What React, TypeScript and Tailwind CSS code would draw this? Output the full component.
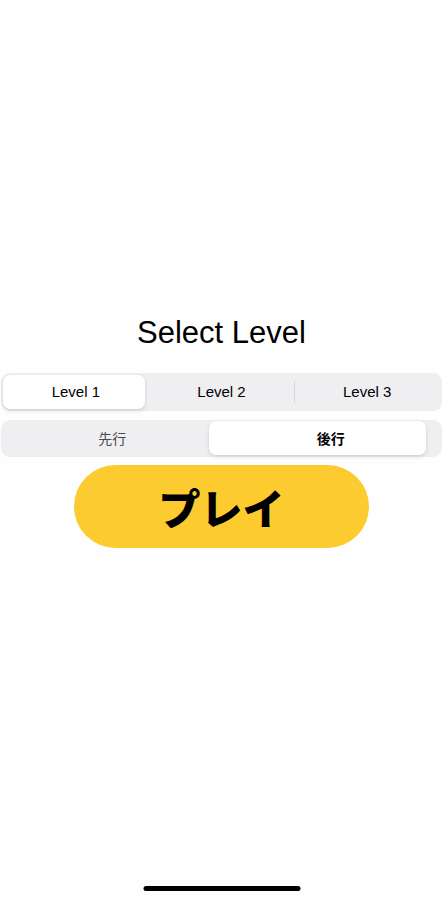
const levels = ["Level 1", "Level 2", "Level 3"];

const App = () => {
  const selectedLevel = 0;

  return (
    <div
      className="relative h-[901px] w-full bg-[#fefefe] flex flex-col items-center pt-[314px]"
      style={{ fontFamily: '"Liberation Sans", "Noto Sans CJK JP", sans-serif' }}
    >
      <h1 className="text-[31px] leading-[38px] text-black">Select Level</h1>

      {/* Level picker */}
      <div className="mt-[21px] w-full px-px">
        <div className="relative flex h-[38px] rounded-[9px] bg-[#efeef1] p-[2px]">
          {levels.map((label, i) => (
            <div key={label} className="relative flex flex-1 items-center justify-center">
              {i === selectedLevel && (
                <div className="absolute inset-y-0 left-0 right-[4px] rounded-[7px] bg-white shadow-[0_2px_4px_rgba(0,0,0,0.12),0_0_1px_rgba(0,0,0,0.08)]" />
              )}
              {i === 2 && (
                <div className="absolute left-0 top-[6px] bottom-[6px] w-px bg-[#d6d6da]" />
              )}
              <span className="relative text-[15px] text-black">{label}</span>
            </div>
          ))}
        </div>
      </div>

      {/* Turn picker */}
      <div className="mt-[9px] w-full px-px">
        <div className="relative flex h-[37px] rounded-[9px] bg-[#efeef1] p-[2px]">
          <div className="absolute top-[1px] bottom-[2px] left-[208px] w-[217px] rounded-[7px] bg-white shadow-[0_2px_4px_rgba(0,0,0,0.12),0_0_1px_rgba(0,0,0,0.08)]" />
          <div className="relative flex flex-1 items-center justify-center">
            <span className="text-[14px] text-[#4a4a4a]" style={{ fontFamily: '"Noto Sans CJK JP", sans-serif' }}>
              先行
            </span>
          </div>
          <div className="relative flex flex-1 items-center justify-center">
            <span className="text-[14px] font-bold text-black" style={{ fontFamily: '"Noto Sans CJK JP", sans-serif' }}>
              後行
            </span>
          </div>
        </div>
      </div>

      {/* Play button */}
      <button
        className="mt-[8px] flex h-[83px] w-[295px] items-center justify-center rounded-full bg-[#fccb2f]"
      >
        <span
          className="text-[42px] font-black leading-none text-black"
          style={{ fontFamily: '"Noto Sans CJK JP", sans-serif' }}
        >
          プレイ
        </span>
      </button>

      {/* Home indicator */}
      <div className="absolute bottom-[10px] left-1/2 h-[5px] w-[157px] -translate-x-1/2 rounded-full bg-black" />
    </div>
  );
};

export default App;
